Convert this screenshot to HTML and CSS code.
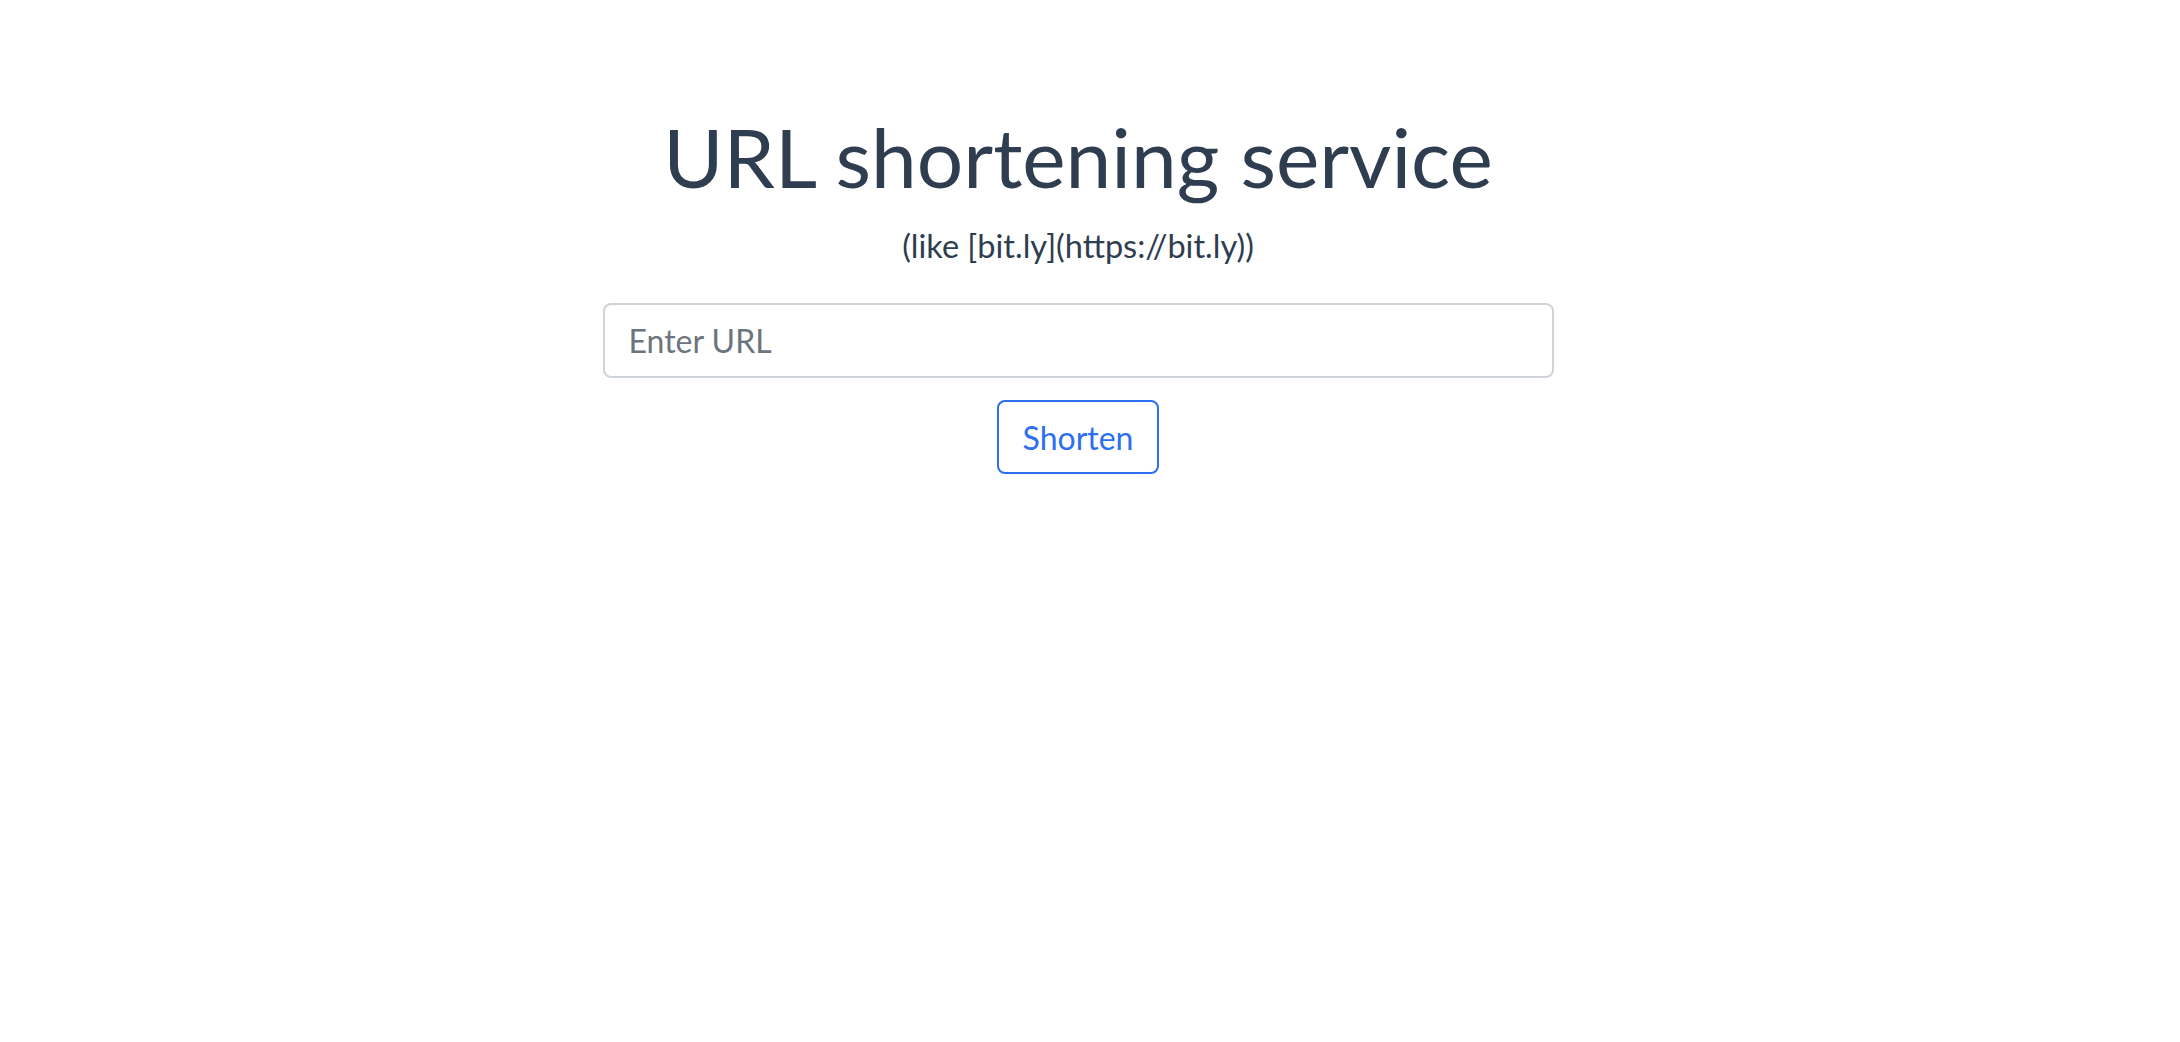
FILE: index.html
```html
<!DOCTYPE html>
<html lang="en">
<head>
<meta charset="utf-8">
<title>URL shortening service</title>
<link rel="stylesheet" href="styles.css">
</head>
<body>
<main class="page">
  <section class="shortener">
    <h1 class="title">URL shortening service</h1>
    <p class="subtitle">(like [bit.ly](https://bit.ly))</p>
    <form class="form" onsubmit="return false">
      <input class="url-input" type="text" placeholder="Enter URL">
      <button class="btn-shorten" type="submit">Shorten</button>
    </form>
  </section>
</main>
</body>
</html>
```

FILE: styles.css
```css
html, body {
  margin: 0;
  padding: 0;
  background: #ffffff;
}

body {
  font-family: "Lato", "Noto Sans", sans-serif;
  color: #2e3d50;
}

.page {
  display: flex;
  justify-content: center;
  padding-right: 24px;
}

.shortener {
  width: 951px;
  display: flex;
  flex-direction: column;
  align-items: center;
  padding-top: 108px;
}

.title {
  margin: 0;
  font-size: 82px;
  font-weight: 400;
  line-height: 96px;
  color: #2e3d50;
  white-space: nowrap;
}

.subtitle {
  margin: 22px 0 0 0;
  font-size: 32.5px;
  line-height: 40px;
  color: #2e3d50;
}

.form {
  width: 100%;
  margin-top: 37px;
  display: flex;
  flex-direction: column;
  align-items: center;
  gap: 22px;
}

.url-input {
  box-sizing: border-box;
  width: 100%;
  height: 75px;
  padding: 0 24px;
  border: 2px solid #ced4da;
  border-radius: 8px;
  font-family: inherit;
  font-size: 32px;
  color: #495057;
  outline: none;
}

.url-input::placeholder {
  color: #6c757d;
}

.btn-shorten {
  box-sizing: border-box;
  height: 74px;
  padding: 0 24px;
  border: 2px solid #2d6ff0;
  border-radius: 8px;
  background: #ffffff;
  font-family: inherit;
  font-size: 32px;
  color: #2d6ff0;
  cursor: pointer;
}
```
